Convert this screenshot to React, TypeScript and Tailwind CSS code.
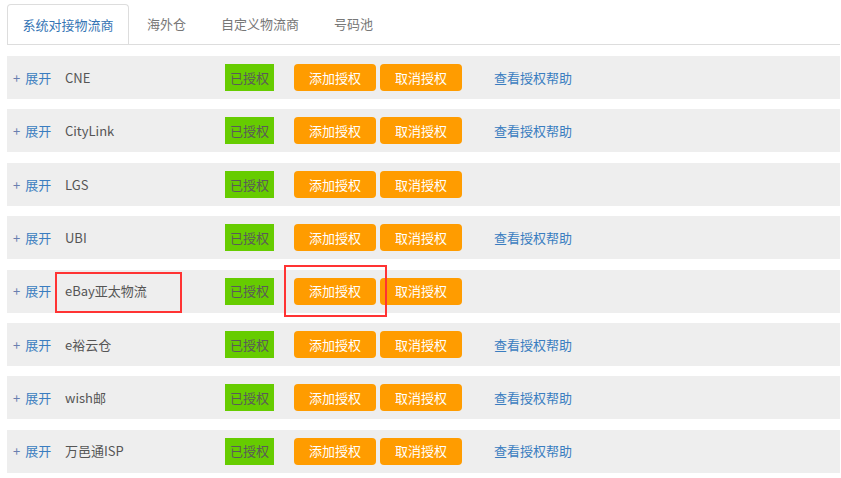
import React from "react";

type Row = { name: string; help: boolean; highlight?: boolean };

const rows: Row[] = [
  { name: "CNE", help: true },
  { name: "CityLink", help: true },
  { name: "LGS", help: false },
  { name: "UBI", help: true },
  { name: "eBay亚太物流", help: false, highlight: true },
  { name: "e裕云仓", help: true },
  { name: "wish邮", help: true },
  { name: "万邑通ISP", help: true },
];

const tabs = ["系统对接物流商", "海外仓", "自定义物流商", "号码池"];

export default function App() {
  return (
    <div
      className="w-[841px] h-[478px] bg-white overflow-hidden pl-[7px] pr-[1px] pt-[4px] text-[13px]"
      style={{ fontFamily: '"Noto Sans CJK SC", "Noto Sans", sans-serif' }}
    >
      <div className="flex border-b border-[#dddddd] h-[41px]">
        {tabs.map((t, i) => (
          <div
            key={t}
            className={
              i === 0
                ? "h-[40px] w-[122px] flex items-center justify-center border border-b-0 border-[#dddddd] rounded-t-[4px] text-[#3574b4] bg-white"
                : "h-[40px] flex items-center px-[17px] ml-[1px] text-[#777777]"
            }
          >
            {t}
          </div>
        ))}
      </div>
      <div className="mt-[11px] flex flex-col gap-[10.4px]">
        {rows.map((r) => (
          <div key={r.name} className="relative h-[43px] bg-[#eeeeee] flex items-center pl-[6px]">
            <span className="w-[52px] flex items-center text-[#3a7dc0]">
              <span className="text-[#6a7fb0]">+</span>
              <span className="ml-[5px]">展开</span>
            </span>
            <span className="w-[160px] text-[#555555]">{r.name}</span>
            <span className="w-[49px] h-[27px] bg-[#66cc00] text-[#5a5a5a] flex items-center justify-center">
              已授权
            </span>
            <button className="ml-[20px] w-[82px] h-[27px] rounded-[4px] bg-[#ff9c00] text-white flex items-center justify-center">
              添加授权
            </button>
            <button className="ml-[4px] w-[82px] h-[27px] rounded-[4px] bg-[#ff9c00] text-white flex items-center justify-center">
              取消授权
            </button>
            {r.help && <span className="ml-[32px] text-[#3a7dc0]">查看授权帮助</span>}
            {r.highlight && (
              <>
                <div className="absolute left-[48px] top-[2px] w-[127px] h-[41px] border-2 border-[#ff3333]" />
                <div className="absolute left-[277px] top-[-5px] w-[103px] h-[52px] border-2 border-[#ff3333]" />
              </>
            )}
          </div>
        ))}
      </div>
    </div>
  );
}
